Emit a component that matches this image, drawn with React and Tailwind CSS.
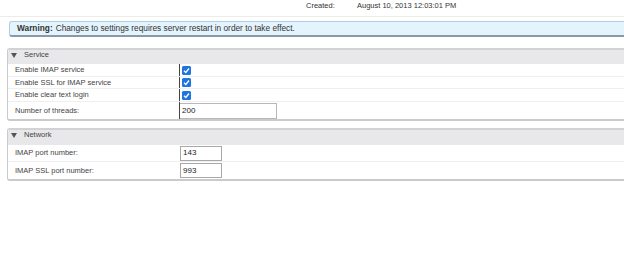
import React from "react";

function Check() {
  return (
    <div className="w-[9px] h-[9px] bg-[#1f74e0] rounded-[1.5px] flex items-center justify-center">
      <svg width="7" height="7" viewBox="0 0 7 7">
        <path d="M1 3.8 L2.8 5.5 L6 1.5" stroke="white" strokeWidth="1.3" fill="none" />
      </svg>
    </div>
  );
}

function Header({ title, h }) {
  return (
    <div className={`${h} bg-[#e8e8ea] border-t-2 border-[#d2d2d4] flex items-start pt-[1px] leading-[8px]`}>
      <svg width="6" height="5" viewBox="0 0 6 5" className="ml-[3px] mt-[2px]">
        <path d="M0 0 L6 0 L3 5 Z" fill="#555" />
      </svg>
      <span className="ml-[7px] text-[#444]">{title}</span>
    </div>
  );
}

function Row({ label, h, last, children, dark }) {
  return (
    <div className={`flex ${h} ${last ? "" : "border-b border-[#efefef]"}`}>
      <div className="w-[171px] pl-[7px] flex items-center text-[#444]">{label}</div>
      <div className={`flex-1 flex items-center ${dark ? "border-l border-[#444]" : ""}`}>{children}</div>
    </div>
  );
}

export default function App() {
  return (
    <div className="w-[624px] h-[279px] bg-white overflow-hidden text-[7.5px] text-[#333]" style={{ fontFamily: '"Liberation Sans", Arial, sans-serif' }}>
      <div className="h-[17px] border-b border-[#ececec] flex items-center pl-[306px] pb-[4px]">
        <span className="w-[51px]">Created:</span>
        <span>August 10, 2013 12:03:01 PM</span>
      </div>
      <div className="mt-[4px] ml-[9px] h-[16px] border border-[#aecbe8] border-b-2 border-b-[#8a98a8] border-r-0 rounded-l-[3px] bg-[#e4f4fd] flex items-center pl-[7px] text-[#333] text-[8.3px]">
        <span className="font-bold">Warning:</span>
        <span className="ml-[3px]">Changes to settings requires server restart in order to take effect.</span>
      </div>

      <div className="mt-[11px] ml-[7px] border-l border-b-2 border-[#cacaca] rounded-l-[3px] overflow-hidden">
        <Header title="Service" h="h-[16px]" />
        <Row label="Enable IMAP service" h="h-[13px]" dark>
          <div className="ml-[2px]"><Check /></div>
        </Row>
        <Row label="Enable SSL for IMAP service" h="h-[12px]" dark>
          <div className="ml-[2px]"><Check /></div>
        </Row>
        <Row label="Enable clear text login" h="h-[13px]" dark>
          <div className="ml-[2px]"><Check /></div>
        </Row>
        <Row label="Number of threads:" h="h-[17px]" last dark>
          <div className="w-[97px] h-[16px] border border-[#b8b8b8] border-l-0 flex items-center pl-[2px] text-[#222] text-[8px]">200</div>
        </Row>
      </div>

      <div className="mt-[7px] ml-[7px] border-l border-b-2 border-[#cacaca] rounded-l-[3px] overflow-hidden">
        <Header title="Network" h="h-[17px]" />
        <Row label="IMAP port number:" h="h-[17px]">
          <div className="ml-[1px] w-[42px] h-[15px] border border-[#a8a8a8] flex items-center pl-[2px] text-[#222] text-[8px]">143</div>
        </Row>
        <Row label="IMAP SSL port number:" h="h-[17px]" last>
          <div className="ml-[1px] w-[42px] h-[15px] border border-[#a8a8a8] flex items-center pl-[2px] text-[#222] text-[8px]">993</div>
        </Row>
      </div>
    </div>
  );
}
